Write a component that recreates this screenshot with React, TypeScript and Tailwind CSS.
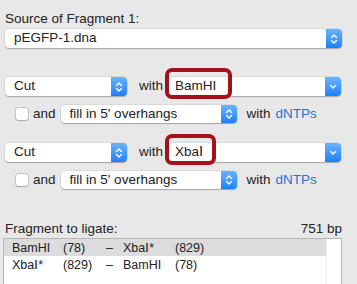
import React from "react";

const font = { fontFamily: '"Liberation Sans", Arial, sans-serif' };

const UpDown = () => (
  <svg width="8" height="12" viewBox="0 0 8 12" fill="none" stroke="white" strokeWidth="1.4" strokeLinecap="round" strokeLinejoin="round">
    <path d="M1.5 4.5 L4 2 L6.5 4.5" />
    <path d="M1.5 7.5 L4 10 L6.5 7.5" />
  </svg>
);

const Down = () => (
  <svg width="8" height="6" viewBox="0 0 8 6" fill="none" stroke="white" strokeWidth="1.4" strokeLinecap="round" strokeLinejoin="round">
    <path d="M1.5 1.5 L4 4 L6.5 1.5" />
  </svg>
);

const Popup = ({ label, className, combo }: { label: string; className: string; combo?: boolean }) => (
  <div className={`flex items-stretch bg-white rounded-[4px] shadow-[0_1px_1px_rgba(0,0,0,0.25),0_0_0_0.5px_rgba(0,0,0,0.12)] ${className}`}>
    <div className={`flex-1 flex items-center ${combo ? "pl-[6px]" : "pl-[9px]"} text-[13.5px] text-[#222]`}>{label}</div>
    <div className="w-[16px] flex items-center justify-center rounded-r-[4px] bg-gradient-to-b from-[#6bb2fb] to-[#1a7ff9]">
      {combo ? <Down /> : <UpDown />}
    </div>
  </div>
);

const CutRow = ({ enzyme, boxW }: { enzyme: string; boxW: string }) => (
  <div className="flex items-center h-[19px] ml-[5px]">
    <Popup label="Cut" className="w-[122px] h-[19px]" />
    <span className="ml-[12px] text-[13.5px] text-[#222]">with</span>
    <div className="relative ml-[6px] w-[172px] h-[19px]">
      <Popup label={enzyme} className="w-[172px] h-[19px]" combo />
      <div className={`absolute -left-[4px] -top-[9px] h-[31px] ${boxW} border-[4px] border-[#a3111b] rounded-[7px]`} />
    </div>
  </div>
);

const FillRow = () => (
  <div className="flex items-center h-[18px] ml-[16px]">
    <div className="w-[12px] h-[12px] bg-white rounded-[2px] shadow-[0_0_0_0.5px_rgba(0,0,0,0.3),0_1px_1px_rgba(0,0,0,0.15)]" />
    <span className="ml-[5px] text-[13.5px] text-[#222]">and</span>
    <Popup label="fill in 5' overhangs" className="ml-[5px] w-[176px] h-[18px]" />
    <span className="ml-[10px] text-[13.5px] text-[#222]">with</span>
    <span className="ml-[5px] text-[13.5px] text-[#1f73d6]">dNTPs</span>
  </div>
);

const rows = [
  ["BamHI", "(78)", "Xba\u2160*", "(829)"],
  ["Xba\u2160*", "(829)", "BamHI", "(78)"],
];

export default function App() {
  return (
    <div className="w-[357px] h-[284px] bg-[#e8e8e8] overflow-hidden" style={font}>
      <div className="pt-[11px] pl-[5px] h-[27px] text-[13.5px] leading-4 text-[#222]">Source of Fragment 1:</div>
      <Popup label="pEGFP-1.dna" className="ml-[5px] mt-[2px] w-[337px] h-[19px]" />
      <div className="mt-[29px]">
        <CutRow enzyme="BamHI" boxW="w-[67px]" />
      </div>
      <div className="mt-[9px]">
        <FillRow />
      </div>
      <div className="mt-[20px]">
        <CutRow enzyme={"Xba\u2160"} boxW="w-[51px]" />
      </div>
      <div className="mt-[9px]">
        <FillRow />
      </div>
      <div className="mt-[32px] ml-[5px] w-[337px] flex justify-between text-[13.5px] leading-4 text-[#222]">
        <span>Fragment to ligate:</span>
        <span>751 bp</span>
      </div>
      <div className="mt-[1px] ml-[3px] w-[339px] h-[60px] bg-white border-t border-l border-r border-[#b5b5b5] flex">
        <div className="flex-1 flex flex-col text-[12.5px] text-[#222]">
          {rows.map((r, i) => (
            <div key={i} className={`grid grid-cols-[51px_43px_17px_52px_1fr] h-[17px] items-center pl-[8px] ${i === 0 ? "bg-[#dcdcdc]" : ""}`}>
              <span>{r[0]}</span>
              <span>{r[1]}</span>
              <span>–</span>
              <span>{r[2]}</span>
              <span>{r[3]}</span>
            </div>
          ))}
        </div>
        <div className="w-[15px] border-l border-[#ededed] bg-white" />
      </div>
    </div>
  );
}
